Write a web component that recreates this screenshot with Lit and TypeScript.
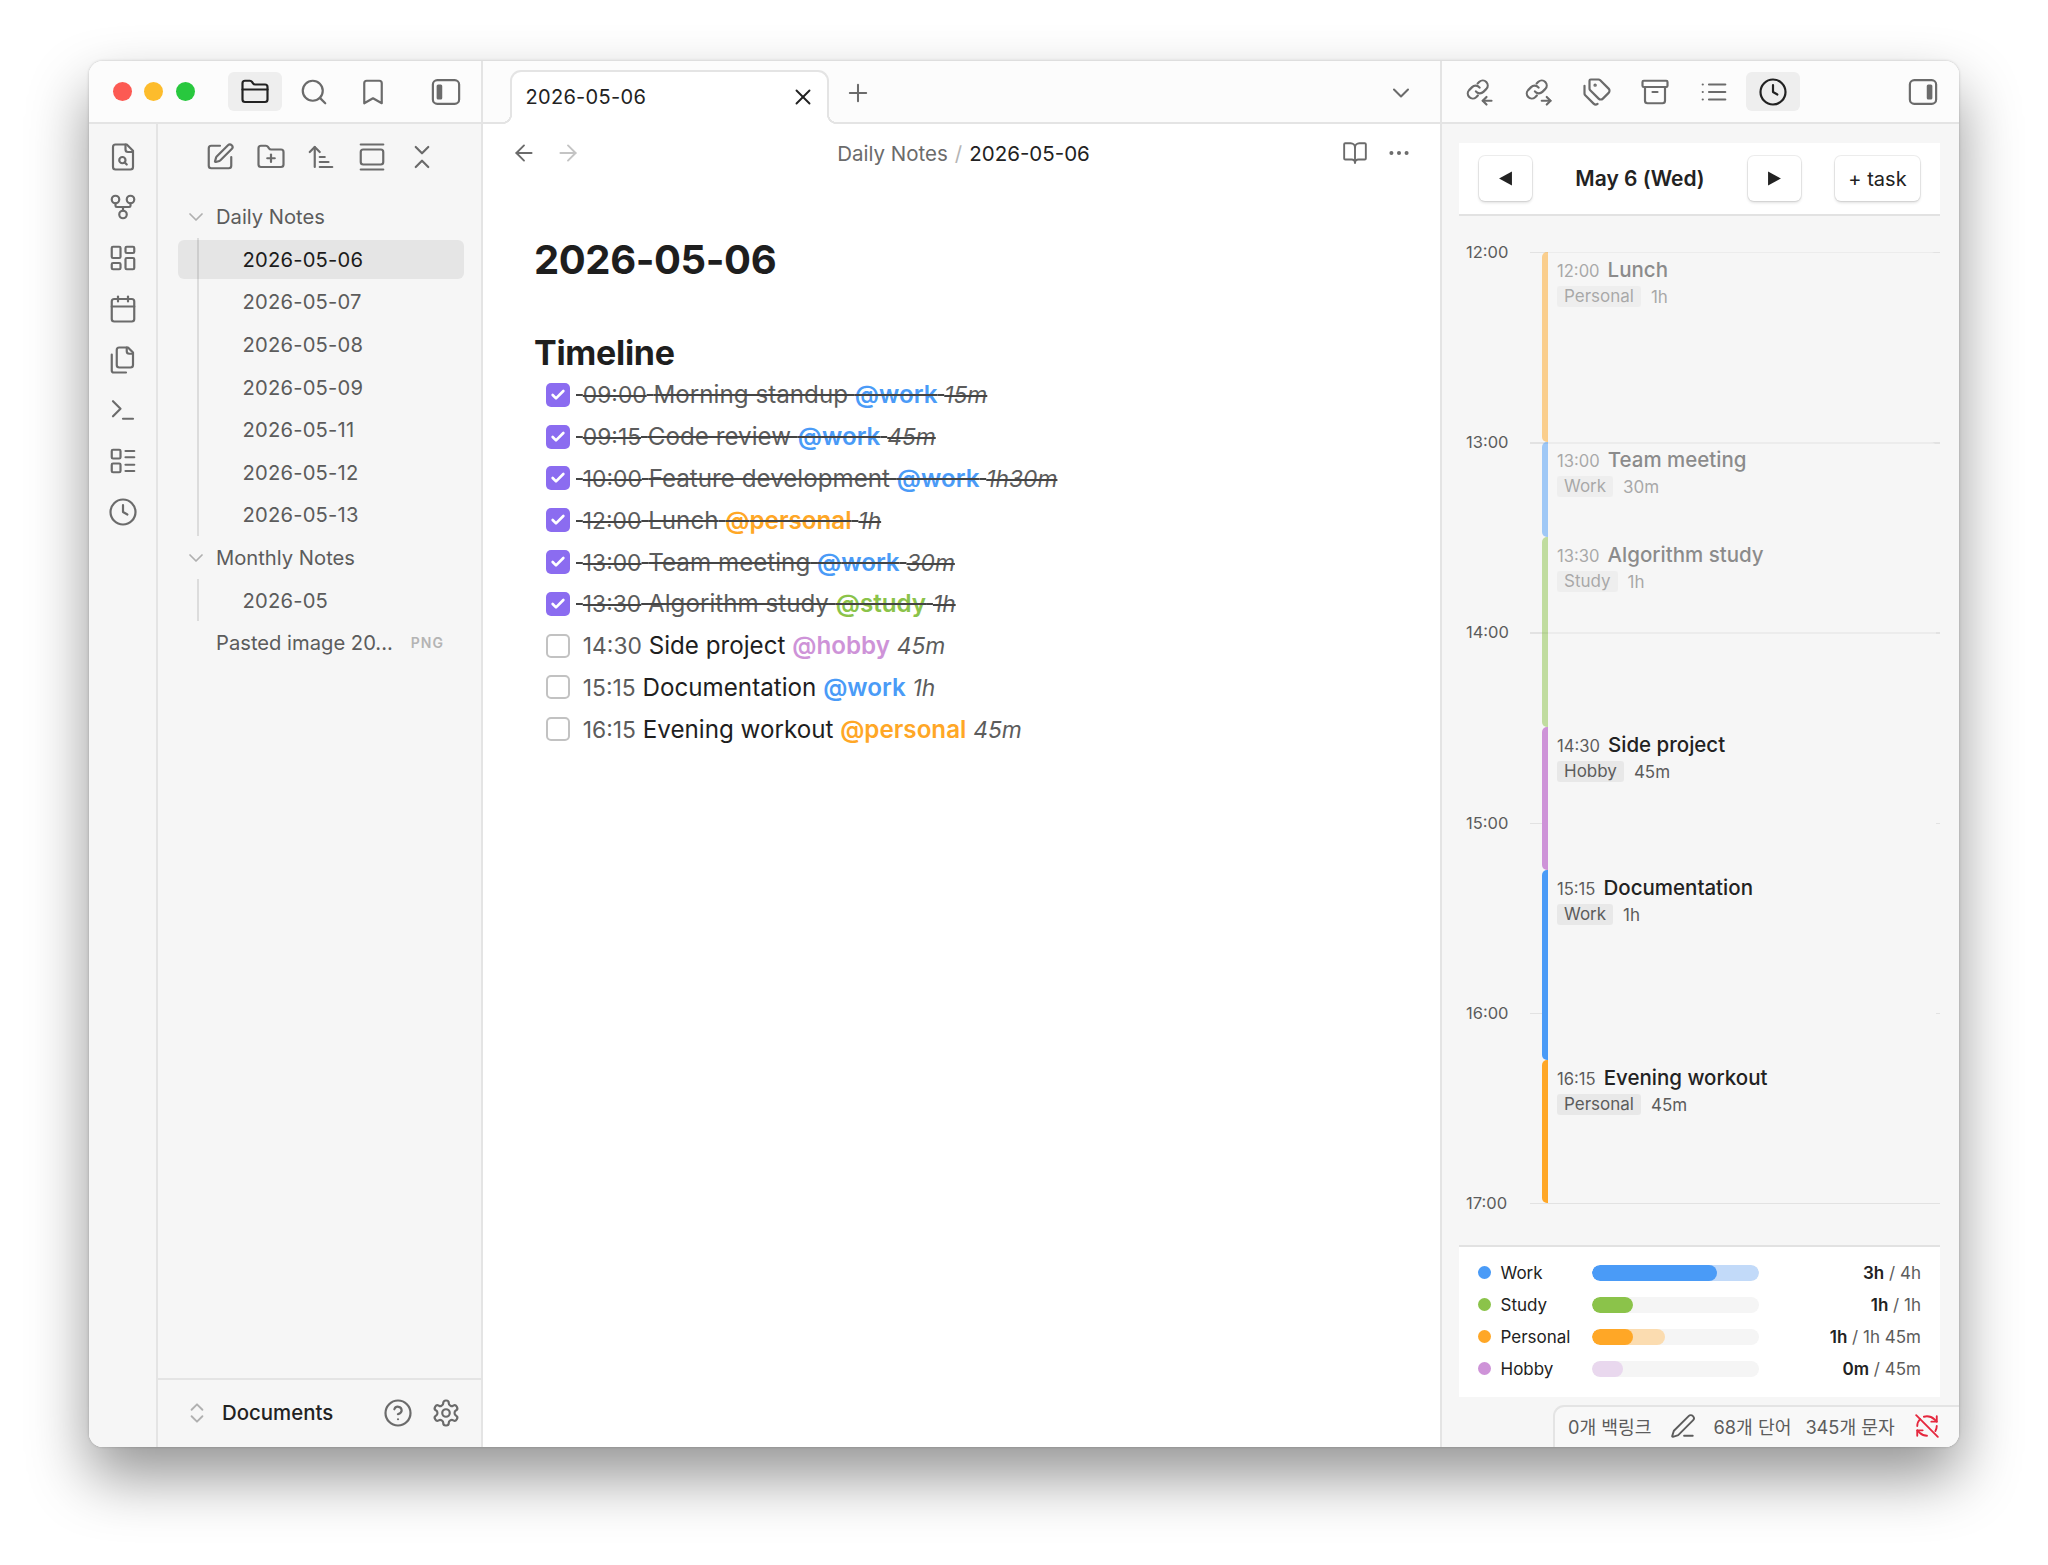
/**
 * Notes app window with file tree, daily note and a day timeline side panel
 */

import { LitElement, html, css, svg } from 'lit';
import { customElement } from 'lit/decorators.js';

const FOLDER = 'M20 20a2 2 0 0 0 2-2V8a2 2 0 0 0-2-2h-7.9a2 2 0 0 1-1.69-.9L9.6 3.9A2 2 0 0 0 7.93 3H4a2 2 0 0 0-2 2v13a2 2 0 0 0 2 2Z';

const ICONS: Record<string, unknown> = {
  folder: svg`<path d=${FOLDER}/><path d="M2 10h20"/>`,
  search: svg`<circle cx="11" cy="11" r="8"/><path d="m21 21-4.3-4.3"/>`,
  bookmark: svg`<path d="m19 21-7-4-7 4V5a2 2 0 0 1 2-2h10a2 2 0 0 1 2 2v16z"/>`,
  panelLeft: svg`<rect x="1.5" y="2.5" width="21" height="19" rx="3.5"/><rect x="4.5" y="6" width="4.5" height="12" rx="1.2" fill="currentColor" stroke="none"/>`,
  panelRight: svg`<rect x="1.5" y="2.5" width="21" height="19" rx="3.5"/><rect x="15" y="6" width="4.5" height="12" rx="1.2" fill="currentColor" stroke="none"/>`,
  fileSearch: svg`<path d="M15 2H6a2 2 0 0 0-2 2v16a2 2 0 0 0 2 2h12a2 2 0 0 0 2-2V7Z"/><path d="M14 2v4a2 2 0 0 0 2 2h4"/><circle cx="11.5" cy="14.5" r="2.5"/><path d="M13.3 16.3 15 18"/>`,
  fork: svg`<circle cx="12" cy="18" r="3"/><circle cx="6" cy="6" r="3"/><circle cx="18" cy="6" r="3"/><path d="M18 9v2c0 .6-.4 1-1 1H7c-.6 0-1-.4-1-1V9"/><path d="M12 12v3"/>`,
  dashboard: svg`<rect width="7" height="9" x="3" y="3" rx="1"/><rect width="7" height="5" x="14" y="3" rx="1"/><rect width="7" height="9" x="14" y="12" rx="1"/><rect width="7" height="5" x="3" y="16" rx="1"/>`,
  calendar: svg`<path d="M8 2v4"/><path d="M16 2v4"/><rect width="18" height="18" x="3" y="4" rx="2"/><path d="M3 10h18"/>`,
  files: svg`<path d="M20 7h-3a2 2 0 0 1-2-2V2"/><path d="M9 18a2 2 0 0 1-2-2V4a2 2 0 0 1 2-2h7l4 4v10a2 2 0 0 1-2 2Z"/><path d="M3 7.6v12.8A1.6 1.6 0 0 0 4.6 22h9.8"/>`,
  terminal: svg`<polyline points="4 17 10 11 4 5"/><line x1="12" x2="20" y1="19" y2="19"/>`,
  layoutList: svg`<rect width="7" height="7" x="3" y="3" rx="1"/><rect width="7" height="7" x="3" y="14" rx="1"/><path d="M14 4h7"/><path d="M14 9h7"/><path d="M14 15h7"/><path d="M14 20h7"/>`,
  clock: svg`<circle cx="12" cy="12" r="10"/><polyline points="12 6.5 12 12 15.5 14"/>`,
  edit: svg`<path d="M12 3H5a2 2 0 0 0-2 2v14a2 2 0 0 0 2 2h14a2 2 0 0 0 2-2v-7"/><path d="M18.375 2.625a1 1 0 0 1 3 3l-9.013 9.014a2 2 0 0 1-.853.505l-2.873.84a.5.5 0 0 1-.62-.62l.84-2.873a2 2 0 0 1 .506-.852z"/>`,
  folderPlus: svg`<path d="M12 10v6"/><path d="M9 13h6"/><path d=${FOLDER}/>`,
  sort: svg`<path d="m3 8 4-4 4 4"/><path d="M7 4v16"/><path d="M11 12h4"/><path d="M11 16h7"/><path d="M11 20h10"/>`,
  gallery: svg`<path d="M3 2h18"/><rect width="18" height="12" x="3" y="6" rx="2"/><path d="M3 22h18"/>`,
  collapse: svg`<path d="m7 20 5-5 5 5"/><path d="m7 4 5 5 5-5"/>`,
  chevronDown: svg`<path d="m6 9 6 6 6-6"/>`,
  upDown: svg`<path d="m7 15 5 5 5-5"/><path d="m7 9 5-5 5 5"/>`,
  help: svg`<circle cx="12" cy="12" r="10"/><path d="M9.09 9a3 3 0 0 1 5.83 1c0 2-3 3-3 3"/><path d="M12 17h.01"/>`,
  gear: svg`<path d="M12.22 2h-.44a2 2 0 0 0-2 2v.18a2 2 0 0 1-1 1.73l-.43.25a2 2 0 0 1-2 0l-.15-.08a2 2 0 0 0-2.73.73l-.22.38a2 2 0 0 0 .73 2.73l.15.1a2 2 0 0 1 1 1.72v.51a2 2 0 0 1-1 1.74l-.15.09a2 2 0 0 0-.73 2.73l.22.38a2 2 0 0 0 2.73.73l.15-.08a2 2 0 0 1 2 0l.43.25a2 2 0 0 1 1 1.73V20a2 2 0 0 0 2 2h.44a2 2 0 0 0 2-2v-.18a2 2 0 0 1 1-1.73l.43-.25a2 2 0 0 1 2 0l.15.08a2 2 0 0 0 2.73-.73l.22-.39a2 2 0 0 0-.73-2.73l-.15-.08a2 2 0 0 1-1-1.74v-.5a2 2 0 0 1 1-1.74l.15-.09a2 2 0 0 0 .73-2.73l-.22-.38a2 2 0 0 0-2.73-.73l-.15.08a2 2 0 0 1-2 0l-.43-.25a2 2 0 0 1-1-1.73V4a2 2 0 0 0-2-2z"/><circle cx="12" cy="12" r="3"/>`,
  x: svg`<path d="M18 6 6 18"/><path d="m6 6 12 12"/>`,
  plus: svg`<path d="M5 12h14"/><path d="M12 5v14"/>`,
  left: svg`<path d="m12 19-7-7 7-7"/><path d="M19 12H5"/>`,
  right: svg`<path d="M5 12h14"/><path d="m12 5 7 7-7 7"/>`,
  book: svg`<path d="M12 7v14"/><path d="M3 18a1 1 0 0 1-1-1V4a1 1 0 0 1 1-1h5a4 4 0 0 1 4 4 4 4 0 0 1 4-4h5a1 1 0 0 1 1 1v13a1 1 0 0 1-1 1h-6a3 3 0 0 0-3 3 3 3 0 0 0-3-3z"/>`,
  more: svg`<circle cx="12" cy="12" r="1"/><circle cx="19" cy="12" r="1"/><circle cx="5" cy="12" r="1"/>`,
  linkIn: svg`<path d="M9.5 11.5a4 4 0 0 0 6 .4l2.4-2.4a4 4 0 0 0-5.6-5.7l-1.4 1.4"/><path d="M12.5 8.5a4 4 0 0 0-6-.4l-2.4 2.4a4 4 0 0 0 5.6 5.7l1.4-1.4"/><path d="M15 19h7"/><path d="m18 16-3 3 3 3"/>`,
  linkOut: svg`<path d="M9.5 11.5a4 4 0 0 0 6 .4l2.4-2.4a4 4 0 0 0-5.6-5.7l-1.4 1.4"/><path d="M12.5 8.5a4 4 0 0 0-6-.4l-2.4 2.4a4 4 0 0 0 5.6 5.7l1.4-1.4"/><path d="M15 19h7"/><path d="m19 16 3 3-3 3"/>`,
  tags: svg`<path d="M13.172 2a2 2 0 0 1 1.414.586l6.71 6.71a2.4 2.4 0 0 1 0 3.408l-4.592 4.592a2.4 2.4 0 0 1-3.408 0l-6.71-6.71A2 2 0 0 1 6 9.172V3a1 1 0 0 1 1-1z"/><path d="M2 7v6.172a2 2 0 0 0 .586 1.414l6.71 6.71a2.4 2.4 0 0 0 3.182.18"/><circle cx="10.5" cy="6.5" r=".5" fill="currentColor"/>`,
  archive: svg`<rect width="20" height="5" x="2" y="3" rx="1"/><path d="M4 8v11a2 2 0 0 0 2 2h12a2 2 0 0 0 2-2V8"/><path d="M10 12h4"/>`,
  list: svg`<path d="M3 12h.01"/><path d="M3 18h.01"/><path d="M3 6h.01"/><path d="M8 12h13"/><path d="M8 18h13"/><path d="M8 6h13"/>`,
  pen: svg`<path d="M13 21h8"/><path d="M21.174 6.812a1 1 0 0 0-3.986-3.987L3.842 16.174a2 2 0 0 0-.5.83l-1.321 4.352a.5.5 0 0 0 .623.622l4.353-1.32a2 2 0 0 0 .83-.497z"/>`,
  syncOff: svg`<path d="M21 8 18.74 5.74A9.75 9.75 0 0 0 12 3c-1 0-1.97.15-2.88.44"/><path d="M16 8h5V3"/><path d="M12 21c-2.5 0-4.9-1-6.74-2.74L3 16"/><path d="M8 16H3v5"/><path d="M3 12c0-2.49 1-4.74 2.64-6.36"/><path d="M21 12c0 1.67-.47 3.22-1.27 4.53"/><path d="m2 2 20 20"/>`,
};

const icon = (name: string) => html`<svg class="ic" viewBox="0 0 24 24" fill="none" stroke="currentColor" stroke-width="1.75" stroke-linecap="round" stroke-linejoin="round">${ICONS[name]}</svg>`;

const COLORS: Record<string, string> = {
  work: '#4a9bf7',
  study: '#8bc34a',
  personal: '#ffa726',
  hobby: '#ce93d8',
};

const HOUR_HEIGHT = 190.2;

const TASKS = [
  { time: '09:00', title: 'Morning standup', tag: 'work', dur: '15m', done: true },
  { time: '09:15', title: 'Code review', tag: 'work', dur: '45m', done: true },
  { time: '10:00', title: 'Feature development', tag: 'work', dur: '1h30m', done: true },
  { time: '12:00', title: 'Lunch', tag: 'personal', dur: '1h', done: true },
  { time: '13:00', title: 'Team meeting', tag: 'work', dur: '30m', done: true },
  { time: '13:30', title: 'Algorithm study', tag: 'study', dur: '1h', done: true },
  { time: '14:30', title: 'Side project', tag: 'hobby', dur: '45m', done: false },
  { time: '15:15', title: 'Documentation', tag: 'work', dur: '1h', done: false },
  { time: '16:15', title: 'Evening workout', tag: 'personal', dur: '45m', done: false },
];

const BLOCKS = [
  { time: '12:00', title: 'Lunch', cat: 'Personal', dur: '1h', mins: 60, past: true },
  { time: '13:00', title: 'Team meeting', cat: 'Work', dur: '30m', mins: 30, past: true },
  { time: '13:30', title: 'Algorithm study', cat: 'Study', dur: '1h', mins: 60, past: true },
  { time: '14:30', title: 'Side project', cat: 'Hobby', dur: '45m', mins: 45, past: false },
  { time: '15:15', title: 'Documentation', cat: 'Work', dur: '1h', mins: 60, past: false },
  { time: '16:15', title: 'Evening workout', cat: 'Personal', dur: '45m', mins: 45, past: false },
];

const STATS = [
  { name: 'Work', done: 75, plan: 100, spent: '3h', total: '4h', track: '#c2daf9' },
  { name: 'Study', done: 25, plan: 25, spent: '1h', total: '1h', track: '#c9e3a9' },
  { name: 'Personal', done: 25, plan: 43.75, spent: '1h', total: '1h 45m', track: '#fbdcb0' },
  { name: 'Hobby', done: 0, plan: 19, spent: '0m', total: '45m', track: '#e9d8ee' },
];

@customElement('app-root')
export class AppRoot extends LitElement {
  static override styles = css`
    :host {
      display: block;
      width: 2048px;
      height: 1565px;
      padding: 61px 89px 118px 89px;
      box-sizing: border-box;
      background: #fff;
      font-family: Inter, 'Noto Sans CJK KR', sans-serif;
      color: #222;
      overflow: hidden;
    }
    .ic {
      width: 30px;
      height: 30px;
      display: block;
      flex: none;
    }
    .window {
      display: flex;
      height: 100%;
      background: #fff;
      border-radius: 14px;
      overflow: hidden;
    }
    .shadow {
      height: 100%;
      border-radius: 14px;
      box-shadow: 0 30px 60px rgba(0, 0, 0, 0.42), 0 0 3px rgba(0, 0, 0, 0.22);
    }

    /* left column */
    .left {
      width: 394px;
      flex: none;
      display: flex;
      flex-direction: column;
      border-right: 2px solid #e4e4e4;
      box-sizing: border-box;
    }
    .head {
      height: 63px;
      flex: none;
      box-sizing: border-box;
      background: #fcfcfc;
      border-bottom: 2px solid #e4e4e4;
      display: flex;
      align-items: center;
      color: #6b6b6b;
    }
    .lights {
      display: flex;
      gap: 12.7px;
      padding-left: 23.5px;
      margin-right: 33px;
    }
    .lights i {
      width: 19px;
      height: 19px;
      border-radius: 50%;
    }
    .lights .red {
      background: #fc5a53;
    }
    .lights .amber {
      background: #fdbc2c;
    }
    .lights .green {
      background: #28c83e;
    }
    .hbtn {
      width: 54px;
      height: 39px;
      display: flex;
      align-items: center;
      justify-content: center;
      border-radius: 6px;
      margin-right: 5px;
    }
    .hbtn.on {
      background: #eeeeee;
      color: #222;
    }
    .hbtn.end {
      margin-left: auto;
      margin-right: 8px;
    }
    .left-body {
      flex: 1;
      display: flex;
      min-height: 0;
      background: #f6f6f6;
    }
    .ribbon {
      width: 69px;
      flex: none;
      box-sizing: border-box;
      border-right: 2px solid #e4e4e4;
      padding: 17.5px 0 0 0;
      display: flex;
      flex-direction: column;
      align-items: center;
      gap: 20.8px;
      color: #6b6b6b;
    }
    .files {
      flex: 1;
      display: flex;
      flex-direction: column;
      min-width: 0;
    }
    .tools {
      display: flex;
      gap: 20.6px;
      padding: 17.5px 0 0 47px;
      color: #6b6b6b;
    }
    .tree {
      flex: 1;
      padding: 24px 17px 0 20px;
      font-size: 20.2px;
      color: #5c5c5c;
    }
    .row {
      height: 42.6px;
      display: flex;
      align-items: center;
    }
    .row.folder .chev {
      width: 24px;
      margin: 0 8px 0 6px;
      color: #b0b0b0;
    }
    .row .chev .ic {
      width: 24px;
      height: 24px;
    }
    .indent {
      margin-left: 18.5px;
      border-left: 2px solid #dcdcdc;
    }
    .leaf {
      height: 42.6px;
      display: flex;
      align-items: center;
      padding-left: 65px;
      margin-left: -21px;
      position: relative;
      letter-spacing: 0.2px;
    }
    .leaf span {
      position: relative;
    }
    .leaf.on {
      color: #1c1c1c;
    }
    .leaf.on::before {
      content: '';
      position: absolute;
      left: 0;
      right: 0;
      top: 1.5px;
      height: 39px;
      background: rgba(0, 0, 0, 0.065);
      border-radius: 6px;
    }
    .tree-file {
      padding-left: 38px;
      justify-content: space-between;
      padding-right: 20px;
    }
    .ext {
      font-size: 14px;
      font-weight: 600;
      letter-spacing: 1px;
      color: #b4b4b4;
    }
    .vault {
      height: 69px;
      flex: none;
      box-sizing: border-box;
      border-top: 2px solid #e4e4e4;
      display: flex;
      align-items: center;
      padding: 0 20px 2px 26px;
      color: #6b6b6b;
    }
    .vault .ud {
      color: #b0b0b0;
      margin-right: 12px;
    }
    .vault .ud .ic {
      width: 26px;
      height: 26px;
    }
    .vault b {
      font-size: 20.4px;
      font-weight: 500;
      color: #222;
      flex: 1;
    }
    .vault .ic {
      margin-left: 18px;
    }
    .vault .ud .ic {
      margin-left: 0;
    }

    /* center column */
    .center {
      width: 959px;
      flex: none;
      display: flex;
      flex-direction: column;
      box-sizing: border-box;
      border-right: 2px solid #e4e4e4;
    }
    .tabbar {
      align-items: flex-end;
      padding-left: 27px;
    }
    .tab {
      width: 319px;
      height: 54px;
      margin-bottom: -2px;
      box-sizing: border-box;
      background: #fff;
      border: 2px solid #e4e4e4;
      border-bottom: none;
      border-radius: 11px 11px 0 0;
      display: flex;
      align-items: center;
      justify-content: space-between;
      padding: 0 11px 2px 13.5px;
      font-size: 20px;
      letter-spacing: 0.3px;
      color: #222;
      position: relative;
    }
    .tab::before,
    .tab::after {
      content: '';
      position: absolute;
      bottom: 0;
      width: 10px;
      height: 10px;
    }
    .tab::before {
      left: -10px;
      background: radial-gradient(circle at 0 0, #fcfcfc 8px, #e4e4e4 8.3px, #e4e4e4 10px, #fff 10.3px);
    }
    .tab::after {
      right: -10px;
      background: radial-gradient(circle at 100% 0, #fcfcfc 8px, #e4e4e4 8.3px, #e4e4e4 10px, #fff 10.3px);
    }
    .tab .ic {
      width: 26px;
      height: 26px;
    }
    .add {
      margin: 0 0 15px 15px;
      color: #6b6b6b;
    }
    .tabs-menu {
      margin: 0 25px 15px auto;
      color: #6b6b6b;
    }
    .tabs-menu .ic,
    .add .ic {
      width: 28px;
      height: 28px;
    }
    .view-head {
      height: 58px;
      flex: none;
      display: flex;
      align-items: center;
      padding: 0 28px 0 28px;
      color: #6b6b6b;
    }
    .view-head .ic {
      width: 26px;
      height: 26px;
    }
    .nav {
      display: flex;
      gap: 18px;
    }
    .nav .off {
      color: #c4c4c4;
    }
    .crumb {
      flex: 1;
      text-align: center;
      font-size: 20.5px;
      color: #6b6b6b;
      padding-left: 4px;
    }
    .crumb span {
      color: #b4b4b4;
      margin: 0 7px;
    }
    .crumb b {
      font-weight: 400;
      color: #222;
    }
    .actions {
      display: flex;
      gap: 18px;
    }
    .note {
      flex: 1;
      background: #fff;
      padding: 53px 0 0 51px;
    }
    h1 {
      margin: 0;
      font-size: 40px;
      line-height: 50px;
      font-weight: 700;
      letter-spacing: -0.4px;
      color: #1e1e1e;
    }
    h2 {
      margin: 47px 0 1px;
      font-size: 34px;
      line-height: 41px;
      font-weight: 700;
      letter-spacing: -0.3px;
      color: #1e1e1e;
    }
    .task {
      height: 41.8px;
      display: flex;
      align-items: center;
      margin-left: 12px;
      font-size: 24.2px;
      white-space: pre;
      color: #1e1e1e;
    }
    .box {
      width: 24px;
      height: 24px;
      box-sizing: border-box;
      border: 2px solid #c2c2c2;
      border-radius: 5px;
      margin-right: 6px;
      flex: none;
      background: #fff;
    }
    .box.done {
      background: #8b6cf0;
      border: none;
      display: flex;
      align-items: center;
      justify-content: center;
      color: #fff;
    }
    .box.done svg {
      width: 16px;
      height: 16px;
    }
    .task .t {
      font-size: 22.8px;
      color: #5c5c5c;
    }
    .task em {
      font-size: 22.8px;
      color: #5c5c5c;
    }
    .task .tag {
      font-weight: 600;
    }
    .task.done .text {
      text-decoration: line-through;
      text-decoration-color: #444;
      text-decoration-thickness: 2px;
      color: #5c5c5c;
    }

    /* right column */
    .right {
      flex: 1;
      min-width: 0;
      display: flex;
      flex-direction: column;
      position: relative;
    }
    .rhead {
      padding-left: 10px;
      gap: 4.8px;
    }
    .rhead .hbtn {
      margin-right: 0;
    }
    .rhead .hbtn.end {
      margin-left: auto;
      margin-right: 9px;
    }
    .panel {
      flex: 1;
      min-height: 0;
      background: #f6f6f6;
      display: flex;
      flex-direction: column;
      padding: 19px 19px 50px 17px;
    }
    .bar {
      height: 73px;
      flex: none;
      box-sizing: border-box;
      background: #fff;
      border-bottom: 2px solid #e2e2e2;
      display: flex;
      align-items: center;
      padding: 0 20px;
    }
    .btn {
      height: 45px;
      width: 53px;
      box-sizing: border-box;
      background: #fff;
      border-radius: 6px;
      box-shadow: 0 0 0 1px rgba(0, 0, 0, 0.07), 0 2px 3px rgba(0, 0, 0, 0.12);
      display: flex;
      align-items: center;
      justify-content: center;
      font-size: 20px;
      color: #222;
    }
    .btn.task-btn {
      width: 85px;
      margin-left: 34px;
    }
    .btn svg {
      width: 15px;
      height: 15px;
      fill: #222;
    }
    .date {
      flex: 1;
      text-align: center;
      font-size: 21px;
      font-weight: 600;
      color: #222;
    }
    .timeline {
      flex: 1;
      display: flex;
      padding-top: 36px;
      min-height: 0;
    }
    .hours {
      width: 71px;
      flex: none;
      margin-top: -10px;
      padding-left: 7px;
      box-sizing: border-box;
      font-size: 16.5px;
      line-height: 20px;
      color: #5c5c5c;
    }
    .hour {
      height: 190.2px;
    }
    .track {
      flex: 1;
      height: 951px;
      padding: 0 4px 0 12px;
      background: repeating-linear-gradient(to bottom, #e2e2e2 0, #e2e2e2 1.5px, transparent 1.5px, transparent 190.2px);
      border-bottom: 1.5px solid #e2e2e2;
      box-sizing: content-box;
    }
    .block {
      box-sizing: border-box;
      background: #f6f6f6;
      border-left: 6px solid;
      border-radius: 5px;
      padding: 5px 0 0 9px;
    }
    .block.past {
      opacity: 0.5;
    }
    .line1 {
      display: flex;
      align-items: baseline;
      gap: 8px;
      line-height: 26px;
    }
    .line1 span {
      font-size: 16.6px;
      color: #5c5c5c;
    }
    .line1 b {
      font-size: 20.5px;
      font-weight: 500;
      color: #222;
    }
    .line2 {
      display: flex;
      align-items: center;
      gap: 10px;
      font-size: 17px;
      color: #5c5c5c;
      margin-top: 2px;
    }
    .line2 span {
      background: #e8e8e8;
      border-radius: 3px;
      line-height: 21px;
      padding: 0 7px;
    }
    .stats {
      height: 152px;
      flex: none;
      box-sizing: border-box;
      margin-top: auto;
      background: #fff;
      border-top: 2px solid #e2e2e2;
      padding: 9.5px 19px 0 18.5px;
    }
    .stat {
      height: 32px;
      display: flex;
      align-items: center;
      font-size: 17px;
      color: #222;
    }
    .dot {
      width: 13px;
      height: 13px;
      border-radius: 50%;
      margin-right: 10px;
      flex: none;
    }
    .name {
      width: 91px;
      flex: none;
    }
    .meter {
      width: 167px;
      height: 16px;
      flex: none;
      background: #f5f5f5;
      border-radius: 8px;
      overflow: hidden;
    }
    .plan {
      height: 100%;
      border-radius: 8px;
      overflow: hidden;
    }
    .fill {
      height: 100%;
      border-radius: 8px;
    }
    .val {
      margin-left: auto;
      color: #5c5c5c;
    }
    .val b {
      font-weight: 600;
      color: #222;
    }
    .status {
      position: absolute;
      right: 0;
      bottom: 0;
      width: 406px;
      height: 42px;
      box-sizing: border-box;
      background: #f8f8f8;
      border: 2px solid #e4e4e4;
      border-width: 2px 0 0 2px;
      border-radius: 11px 0 0 0;
      display: flex;
      align-items: center;
      padding: 0 0 3px 13px;
      font-size: 18.2px;
      color: #5c5c5c;
      white-space: nowrap;
    }
    .status .ic {
      width: 26px;
      height: 26px;
    }
    .status .pen {
      margin: 0 18px;
    }
    .status .w {
      margin-right: 14px;
    }
    .status .sync {
      color: #e5283e;
      margin-left: 19px;
    }
  `;

  private renderTask(t: (typeof TASKS)[number]) {
    return html`
      <div class="task ${t.done ? 'done' : ''}">
        ${t.done
          ? html`<div class="box done"><svg viewBox="0 0 24 24" fill="none" stroke="currentColor" stroke-width="4" stroke-linecap="round" stroke-linejoin="round"><path d="M20 6 9 17l-5-5"/></svg></div>`
          : html`<div class="box"></div>`}
        <div class="text"> <span class="t">${t.time}</span> ${t.title} <span class="tag" style="color:${COLORS[t.tag]}">@${t.tag}</span> <em>${t.dur}</em></div>
      </div>
    `;
  }

  private renderBlock(b: (typeof BLOCKS)[number]) {
    const color = COLORS[b.cat.toLowerCase()];
    return html`
      <div class="block ${b.past ? 'past' : ''}" style="height:${(b.mins / 60) * HOUR_HEIGHT}px;border-left-color:${color}">
        <div class="line1"><span>${b.time}</span><b>${b.title}</b></div>
        <div class="line2"><span>${b.cat}</span>${b.dur}</div>
      </div>
    `;
  }

  private renderStat(s: (typeof STATS)[number]) {
    const color = COLORS[s.name.toLowerCase()];
    return html`
      <div class="stat">
        <i class="dot" style="background:${color}"></i>
        <div class="name">${s.name}</div>
        <div class="meter">
          <div class="plan" style="width:${s.plan}%;background:${s.track}">
            <div class="fill" style="width:${(s.done / s.plan) * 100}%;background:${color}"></div>
          </div>
        </div>
        <div class="val"><b>${s.spent}</b> / ${s.total}</div>
      </div>
    `;
  }

  override render() {
    return html`
      <div class="shadow">
        <div class="window">
          <div class="left">
            <div class="head">
              <div class="lights"><i class="red"></i><i class="amber"></i><i class="green"></i></div>
              <div class="hbtn on">${icon('folder')}</div>
              <div class="hbtn">${icon('search')}</div>
              <div class="hbtn">${icon('bookmark')}</div>
              <div class="hbtn end">${icon('panelLeft')}</div>
            </div>
            <div class="left-body">
              <div class="ribbon">
                ${['fileSearch', 'fork', 'dashboard', 'calendar', 'files', 'terminal', 'layoutList', 'clock'].map(icon)}
              </div>
              <div class="files">
                <div class="tools">
                  ${['edit', 'folderPlus', 'sort', 'gallery', 'collapse'].map(icon)}
                </div>
                <div class="tree">
                  <div class="row folder"><span class="chev">${icon('chevronDown')}</span>Daily Notes</div>
                  <div class="indent">
                    <div class="leaf on"><span>2026-05-06</span></div>
                    ${['07', '08', '09', '11', '12', '13'].map((d) => html`<div class="leaf">2026-05-${d}</div>`)}
                  </div>
                  <div class="row folder"><span class="chev">${icon('chevronDown')}</span>Monthly Notes</div>
                  <div class="indent"><div class="leaf">2026-05</div></div>
                  <div class="row tree-file">Pasted image 20...<span class="ext">PNG</span></div>
                </div>
                <div class="vault">
                  <span class="ud">${icon('upDown')}</span>
                  <b>Documents</b>
                  ${icon('help')}${icon('gear')}
                </div>
              </div>
            </div>
          </div>

          <div class="center">
            <div class="head tabbar">
              <div class="tab">2026-05-06 ${icon('x')}</div>
              <div class="add">${icon('plus')}</div>
              <div class="tabs-menu">${icon('chevronDown')}</div>
            </div>
            <div class="view-head">
              <div class="nav">${icon('left')}<span class="off">${icon('right')}</span></div>
              <div class="crumb">Daily Notes<span>/</span><b>2026-05-06</b></div>
              <div class="actions">${icon('book')}${icon('more')}</div>
            </div>
            <div class="note">
              <h1>2026-05-06</h1>
              <h2>Timeline</h2>
              ${TASKS.map((t) => this.renderTask(t))}
            </div>
          </div>

          <div class="right">
            <div class="head rhead">
              <div class="hbtn">${icon('linkIn')}</div>
              <div class="hbtn">${icon('linkOut')}</div>
              <div class="hbtn">${icon('tags')}</div>
              <div class="hbtn">${icon('archive')}</div>
              <div class="hbtn">${icon('list')}</div>
              <div class="hbtn on">${icon('clock')}</div>
              <div class="hbtn end">${icon('panelRight')}</div>
            </div>
            <div class="panel">
              <div class="bar">
                <div class="btn"><svg viewBox="0 0 14 14"><path d="M1 7l12-6.5v13z"/></svg></div>
                <div class="date">May 6 (Wed)</div>
                <div class="btn"><svg viewBox="0 0 14 14"><path d="M13 7L1 .5v13z"/></svg></div>
                <div class="btn task-btn">+ task</div>
              </div>
              <div class="timeline">
                <div class="hours">
                  ${['12:00', '13:00', '14:00', '15:00', '16:00', '17:00'].map((h) => html`<div class="hour">${h}</div>`)}
                </div>
                <div class="track">${BLOCKS.map((b) => this.renderBlock(b))}</div>
              </div>
              <div class="stats">${STATS.map((s) => this.renderStat(s))}</div>
            </div>
            <div class="status">
              <span>0개 백링크</span>
              <span class="pen">${icon('pen')}</span>
              <span class="w">68개 단어</span>
              <span>345개 문자</span>
              <span class="sync">${icon('syncOff')}</span>
            </div>
          </div>
        </div>
      </div>
    `;
  }
}
